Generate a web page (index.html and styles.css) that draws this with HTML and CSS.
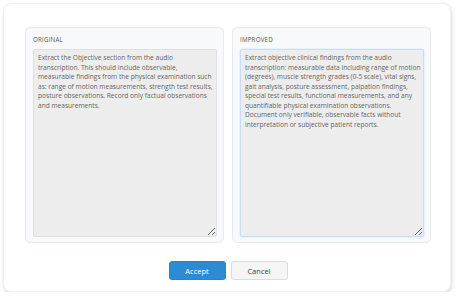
FILE: index.html
```html
<!DOCTYPE html>
<html lang="en">
<head>
  <meta charset="UTF-8">
  <title>Prompt review</title>
  <link rel="stylesheet" href="styles.css">
</head>
<body>

  <div class="dialog">
    <div class="compare">
      <div class="panel">
        <label for="original">ORIGINAL</label>
        <textarea id="original" readonly>Extract the Objective section from the audio transcription. This should include observable, measurable findings from the physical examination such as: range of motion measurements, strength test results, posture observations. Record only factual observations and measurements.</textarea>
      </div>
      <div class="panel">
        <label for="improved">IMPROVED</label>
        <textarea id="improved" class="focused">Extract objective clinical findings from the audio transcription: measurable data including range of motion (degrees), muscle strength grades (0-5 scale), vital signs, gait analysis, posture assessment, palpation findings, special test results, functional measurements, and any quantifiable physical examination observations. Document only verifiable, observable facts without interpretation or subjective patient reports.</textarea>
      </div>
    </div>

    <div class="actions">
      <button class="btn btn-primary">Accept</button>
      <button class="btn">Cancel</button>
    </div>
  </div>

</body>
</html>
```

FILE: styles.css
```css
body {
  font-family: 'Open Sans', 'Noto Sans', sans-serif;
  background-color: #fff;
  margin: 0;
  padding: 3px 0 0 3px;
}

.dialog {
  width: 448px;
  height: 289px;
  box-sizing: border-box;
  padding: 23px 19px 11px 21px;
  background: white;
  border: 1px solid #eef0f2;
  border-radius: 8px;
  box-shadow: 1px 2px 4px rgba(0,0,0,0.14);
  display: flex;
  flex-direction: column;
}

.compare {
  display: grid;
  grid-template-columns: 1fr 1fr;
  gap: 8px;
  height: 218px;
}

.panel {
  display: flex;
  flex-direction: column;
  background: #f8f9fb;
  border: 1px solid #e7eaee;
  border-radius: 5px;
  padding: 7px 6px 5px 7px;
}

.panel label {
  font-size: 6.2px;
  letter-spacing: 0.2px;
  color: #555;
  line-height: 8px;
  margin: 1px 0 5px;
}

textarea {
  flex: 1;
  resize: vertical;
  font-family: 'Open Sans', 'Noto Sans', sans-serif;
  font-size: 6.6px;
  line-height: 9.5px;
  color: #666;
  background: #ededed;
  border: 1px solid #e0e0e0;
  border-radius: 2px;
  padding: 3px 2px 3px 4px;
  margin: 0;
  outline: none;
}

textarea.focused {
  border-color: #c9def4;
  box-shadow: 0 0 2px rgba(120,170,230,0.35);
}

.actions {
  display: flex;
  justify-content: center;
  gap: 5px;
  margin-top: 18px;
}

.btn {
  width: 57px;
  height: 19px;
  font-family: 'Open Sans', 'Noto Sans', sans-serif;
  font-size: 7.5px;
  color: #444;
  background: #f5f5f5;
  border: 1px solid #dcdcdc;
  border-radius: 3px;
  padding: 0;
}

.btn-primary {
  background: #2d8bd3;
  border-color: #2a84c9;
  color: #fff;
}
```
